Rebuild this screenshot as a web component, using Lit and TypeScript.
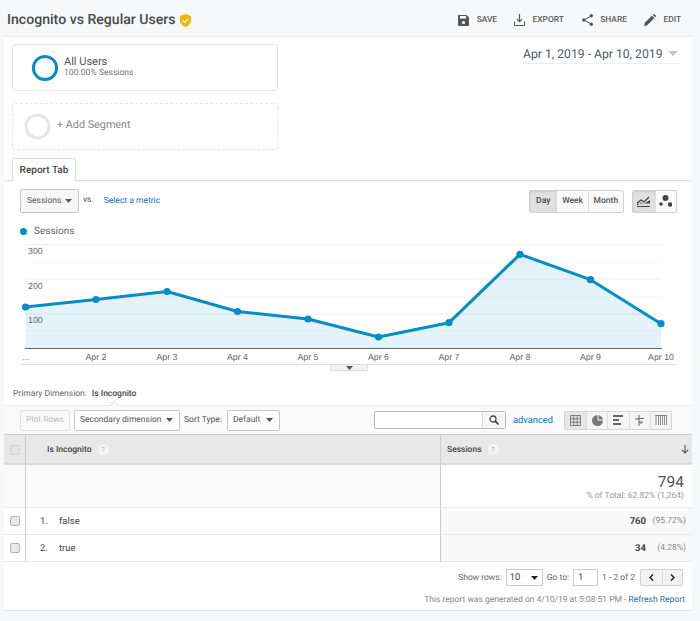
import { LitElement, html, css, svg } from "lit";
import { customElement } from "lit/decorators.js";

const xs = [25.5, 96, 167, 237.5, 308, 378.5, 449, 520, 590.5, 661];
const ys = [307, 299.5, 291.5, 311.5, 319, 337, 322.7, 254.3, 279.7, 323.7];
const labels = ["…", "Apr 2", "Apr 3", "Apr 4", "Apr 5", "Apr 6", "Apr 7", "Apr 8", "Apr 9", "Apr 10"];
const Y0 = 240;

const caret = html`<svg class="caret" width="7" height="4" viewBox="0 0 7 4"><path d="M0 0h7L3.5 4z" fill="#555"/></svg>`;

@customElement("app-root")
export class AppRoot extends LitElement {
  static styles = css`
    :host { display: block; width: 700px; height: 621px; overflow: hidden; background: #f6f8fa; font-family: Roboto, "Liberation Sans", sans-serif; color: #444; text-rendering: geometricPrecision; }
    svg { display: block; flex: none; }
    .head { height: 36px; display: flex; align-items: center; padding: 4px 19px 0 7px; box-sizing: border-box; }
    .title { font-size: 14.1px; font-weight: 500; color: #4a4a4a; }
    .shield { margin-left: 4px; }
    .actions { margin-left: auto; display: flex; align-items: center; }
    .act { display: flex; align-items: center; font-size: 8.4px; font-weight: 500; color: #5a5a5a; }
    .act span { margin-left: 7.5px; }
    .a1 { margin-right: 17px; } .a2 { margin-right: 18px; } .a3 { margin-right: 17px; }
    .panel { margin-left: 4px; width: 688px; height: 575px; background: #fff; border-top: 1px solid #e8eaec; border-bottom: 1px solid #e4e4e4; box-sizing: border-box; display: flex; flex-direction: column; }
    .top { display: flex; justify-content: space-between; padding: 7px 12px 0 8px; }
    .segs { display: flex; flex-direction: column; gap: 12px; }
    .seg { width: 266px; height: 47px; box-sizing: border-box; border: 1px solid #e6e6e6; border-radius: 3px; display: flex; align-items: center; }
    .seg.all { padding-left: 18px; }
    .seg.add { border-style: dashed; padding-left: 11px; color: #888; font-size: 10.8px; }
    .seg .txt { margin-left: 6px; }
    .seg .add-t { margin-left: 6px; margin-top: -4px; }
    .name { font-size: 11px; color: #555; line-height: 13px; }
    .sub { font-size: 8.6px; color: #777; line-height: 11px; }
    .all .txt { margin-left: 5px; margin-top: -1px; }
    .date { width: 158px; height: 20px; border-bottom: 1px solid #eee; display: flex; align-items: center; justify-content: space-between; font-size: 12.2px; color: #4f5b66; padding: 0 1px; box-sizing: border-box; white-space: nowrap; }
    .date svg { margin-right: 1px; }
    .tabrow { margin-top: 8px; padding-left: 8px; border-bottom: 1px solid #d9d9d9; height: 22px; display: flex; }
    .tab { width: 64px; height: 23px; box-sizing: border-box; border: 1px solid #d9d9d9; border-bottom: none; border-radius: 3px 3px 0 0; background: #fff; font-size: 10px; font-weight: 500; color: #444; display: flex; align-items: center; justify-content: center; }
    .ctl { display: flex; align-items: center; padding: 8px 15px 0 16px; height: 24px; box-sizing: content-box; }
    .dd { height: 24px; box-sizing: border-box; border: 1px solid #c8c8c8; border-radius: 2px; background: #f7f7f7; font-size: 8.5px; color: #555; display: flex; align-items: center; justify-content: space-between; padding: 0 6px; white-space: nowrap; }
    .dd.s { width: 59px; }
    .vs { font-size: 8.5px; color: #555; margin-left: 4px; margin-top: -3px; }
    a { color: #1f6fa8; text-decoration: none; }
    .metric { font-size: 8.5px; margin-left: 10px; white-space: nowrap; }
    .btns { display: flex; border: 1px solid #d0d0d0; border-radius: 2px; height: 23px; box-sizing: border-box; background: #fafafa; font-size: 8.5px; font-weight: 500; color: #555; }
    .btns div { display: flex; align-items: center; justify-content: center; border-left: 1px solid #ddd; box-sizing: border-box; }
    .btns div:first-child { border-left: none; }
    .btns .on { background: #e0e0e0; color: #444; box-shadow: inset 0 1px 2px rgba(0,0,0,.1); }
    .b1 { margin-left: auto; }
    .b2 { margin-left: 8px; }
    .legend { display: flex; align-items: center; margin-left: 16px; margin-top: 12px; height: 12px; font-size: 10px; color: #666; }
    .dot { width: 7px; height: 7px; border-radius: 50%; background: #058dc7; margin-right: 7px; }
    .chart { margin-top: 3px; position: relative; height: 130px; }
    .grip { position: absolute; left: 326px; top: 125px; width: 38px; height: 6px; box-sizing: border-box; background: #f2f2f2; border: 1px solid #ddd; border-top: none; border-radius: 0 0 2px 2px; display: flex; align-items: center; justify-content: center; }
    .prim { margin: 18px 0 0 9px; height: 12px; font-size: 8.5px; color: #666; display: flex; align-items: center; gap: 5px; white-space: nowrap; }
    .prim b { font-weight: 500; color: #444; }
    .wrap { position: relative; }
    .notch { position: absolute; left: 107px; top: 32px; width: 6px; height: 6px; background: #fafafa; border-left: 1px solid #e5e5e5; border-top: 1px solid #e5e5e5; transform: rotate(45deg); }
    .bar { margin-top: 5px; height: 29px; box-sizing: border-box; background: #fafafa; border-top: 1px solid #eee; display: flex; align-items: center; padding: 0 20px 0 16px; font-size: 8.5px; color: #555; white-space: nowrap; }
    .pb { height: 21px; box-sizing: border-box; border: 1px solid #e2e2e2; border-radius: 2px; display: flex; align-items: center; justify-content: center; flex: none; }
    .plot { width: 50px; color: #bbb; }
    .sec { width: 106px; margin-left: 4px; border-color: #c8c8c8; background: #fff; justify-content: space-between; padding: 0 6px 0 5px; }
    .sort { margin-left: 4px; width: 39px; }
    .def { width: 53px; margin-left: 4px; border-color: #c8c8c8; background: #fff; justify-content: space-between; padding: 0 6px 0 5px; }
    .search { margin-left: 94px; width: 132px; height: 18px; box-sizing: border-box; border: 1px solid #bbb; border-radius: 2px; display: flex; background: #fff; justify-content: flex-end; flex: none; }
    .search div { width: 22px; border-left: 1px solid #d6d6d6; background: #f6f6f6; display: flex; align-items: center; justify-content: center; }
    .adv { margin-left: 7px; font-size: 9.3px; width: 44px; flex: none; }
    .views { margin-left: 7px; display: grid; grid-template-columns: repeat(5, 1fr); width: 108px; height: 19px; border: 1px solid #d5d5d5; box-sizing: border-box; background: #f4f4f4; flex: none; }
    .views div { display: flex; align-items: center; justify-content: center; border-left: 1px solid #ddd; }
    .views div:first-child { border-left: none; background: #e6e6e6; }
    .tbl { display: grid; grid-template-columns: 22px 415px 251px; grid-template-rows: 31px 43px 27px 27px; }
    .tbl > div { box-sizing: border-box; display: flex; align-items: center; font-size: 9.5px; color: #444; }
    .tbl > .h { background: #e8e8e8; border-top: 1px solid #ccc; border-bottom: 2px solid #dadada; font-size: 8.5px; font-weight: 500; padding-top: 1px; }
    .c0 { border-right: 1px solid #ccc; justify-content: center; }
    .c1 { border-right: 1px solid #ccc; }
    .r { border-bottom: 1px solid #eaeaea; }
    .c2.r { background: #f9f9f9; justify-content: flex-end; padding-right: 6px; }
    .tot.c0 { background: #fafafa; }
    .tot.c1 { background: #fafafa; }
    .tbl > .tot.c2 { background: #fff; flex-direction: column; align-items: flex-end; justify-content: center; padding-right: 8px; padding-top: 4px; }
    .big { font-size: 15.5px; line-height: 17px; color: #555; }
    .pct { font-size: 8.5px; line-height: 11px; color: #999; }
    .chk { width: 10px; height: 10px; border: 1px solid #b5b5b5; border-radius: 2px; background: #e8e8e8; box-sizing: border-box; }
    .h .chk { border-color: #d0d0d0; background: #e4e4e4; }
    .q { width: 11px; height: 11px; border-radius: 50%; background: #f4f4f4; color: #aaa; font-size: 7px; font-weight: 400; display: flex; align-items: center; justify-content: center; margin-left: 6px; }
    .tbl > .hname { padding-left: 21px; }
    .tbl > .hs { padding-left: 6px; padding-right: 3px; }
    .arrow { margin-left: auto; }
    .num { width: 19px; margin-left: 14px; }
    .val { font-weight: 700; font-size: 9.5px; color: #444; }
    .share { width: 40px; text-align: right; font-size: 8.5px; color: #888; }
    .foot { display: flex; align-items: center; justify-content: flex-end; margin-top: 7px; height: 17px; padding-right: 9px; font-size: 8.5px; color: #666; white-space: nowrap; }
    .sel { width: 37px; height: 17px; box-sizing: border-box; border: 1px solid #ccc; margin-left: 4px; display: flex; align-items: center; justify-content: space-between; padding: 0 4px 0 3px; font-size: 9.5px; color: #444; }
    .sel svg path { fill: #222; }
    .goto { margin-left: 4px; }
    .inp { width: 25px; height: 17px; box-sizing: border-box; border: 1px solid #ccc; margin-left: 4px; display: flex; align-items: center; padding-left: 4px; font-size: 9.5px; color: #444; }
    .rng { margin-left: 4px; }
    .pg { margin-left: 5px; width: 43px; height: 17px; box-sizing: border-box; border: 1px solid #d0d0d0; border-radius: 2px; background: #f2f2f2; display: grid; grid-template-columns: 1fr 1fr; }
    .pg div { display: flex; align-items: center; justify-content: center; }
    .pg div + div { border-left: 1px solid #ddd; }
    .gen { margin-top: 8px; padding-right: 7px; text-align: right; font-size: 8.5px; line-height: 12px; color: #888; }
  `;

  chart() {
    const pts = xs.map((x, i) => `${x},${ys[i] - Y0}`).join(" ");
    const area = `25.5,${348.5 - Y0} ${pts} 661,${348.5 - Y0}`;
    const grid = [244.5, 262, 279, 297, 314, 331];
    return html`<svg width="688" height="130" viewBox="0 0 688 130" style="margin-left:-4px">
      ${grid.map((g, i) => svg`<line x1="25" x2="662" y1=${g - Y0} y2=${g - Y0} stroke=${i % 2 ? "#f7f7f7" : "#f0f0f0"}/>`)}
      <polygon points=${area} fill="#058dc7" fill-opacity=".11"/>
      <polyline points=${pts} fill="none" stroke="#058dc7" stroke-width="3" stroke-linejoin="round"/>
      ${xs.map((x, i) => svg`<circle cx=${x} cy=${ys[i] - Y0} r="3.6" fill="#058dc7"/>`)}
      <line x1="25" x2="662" y1=${108.5} y2=${108.5} stroke="#666"/>
      <line x1="21" x2="676" y1=${124.5} y2=${124.5} stroke="#ddd"/>
      ${[["300", 251], ["200", 286], ["100", 320]].map(([t, y]) => svg`<text x="28" y=${(y as number) - Y0 + 3} font-size="8.8" fill="#666" font-family="Liberation Sans">${t}</text>`)}
      ${labels.map((l, i) => i === 0
        ? svg`<text x="22" y="120" font-size="8.8" fill="#888" font-family="Liberation Sans">...</text>`
        : svg`<text x=${xs[i]} y="120" text-anchor="middle" font-size="8.8" fill="#666" font-family="Liberation Sans">${l}</text>`)}
    </svg>`;
  }

  render() {
    return html`
      <div class="head">
        <div class="title">Incognito vs Regular Users</div>
        <svg class="shield" width="11" height="13" viewBox="0 0 11 13"><path d="M5.5 0L11 2v4.2c0 3-2.3 5.6-5.5 6.8C2.300 11.800 0 9.200 0 6.200V2z" fill="#f4b400"/><path d="M3 6.500l1.800 1.800L8.200 4.800" fill="none" stroke="#fff" stroke-width="1.300"/></svg>
        <div class="actions">
          <div class="act a1"><svg width="11" height="11" viewBox="0 0 11 11"><path d="M0 1a1 1 0 011-1h7.500L11 2.500V10a1 1 0 01-1 1H1a1 1 0 01-1-1z" fill="#555"/><rect x="2" y="1" width="6" height="2.600" fill="#f6f8fa"/><circle cx="5.500" cy="7.500" r="1.600" fill="#f6f8fa"/></svg><span>SAVE</span></div>
          <div class="act a2"><svg width="11" height="12" viewBox="0 0 11 12"><path d="M5.500 0v7.500M3 5.200l2.500 2.500L8 5.200" fill="none" stroke="#555" stroke-width="1.200"/><path d="M.5 7.500v4h10v-4" fill="none" stroke="#555"/></svg><span>EXPORT</span></div>
          <div class="act a3"><svg width="11" height="12" viewBox="0 0 11 12"><path d="M9.500 1.800L1.800 6l7.700 4.200" fill="none" stroke="#555"/><circle cx="9.300" cy="1.800" r="1.700" fill="#555"/><circle cx="9.300" cy="10.200" r="1.700" fill="#555"/><circle cx="1.800" cy="6" r="1.700" fill="#555"/></svg><span>SHARE</span></div>
          <div class="act"><svg width="12" height="12" viewBox="0 0 12 12"><path d="M0 12l.8-3.200L8 1.600 10.400 4 3.200 11.200zM8.800.8l.6-.6a.8.8 0 011.100 0l1.300 1.300a.8.8 0 010 1.100l-.6.6z" fill="#555"/></svg><span>EDIT</span></div>
        </div>
      </div>
      <div class="panel">
        <div class="top">
          <div class="segs">
            <div class="seg all">
              <svg width="28" height="28" viewBox="0 0 28 28"><circle cx="14" cy="14" r="11.600" fill="none" stroke="#058dc7" stroke-width="3"/></svg>
              <div class="txt"><div class="name">All Users</div><div class="sub">100.00% Sessions</div></div>
            </div>
            <div class="seg add">
              <svg width="27" height="27" viewBox="0 0 27 27"><circle cx="13.500" cy="13.500" r="11.500" fill="none" stroke="#e6e6e6" stroke-width="3"/></svg>
              <div class="add-t">+ Add Segment</div>
            </div>
          </div>
          <div class="date">Apr 1, 2019 - Apr 10, 2019 <svg width="10" height="5" viewBox="0 0 10 5"><path d="M0 0h10L5 5z" fill="#c4c4c4"/></svg></div>
        </div>
        <div class="tabrow"><div class="tab">Report Tab</div></div>
        <div class="ctl">
          <div class="dd s">Sessions ${caret}</div>
          <div class="vs">vs.</div>
          <a class="metric">Select a metric</a>
          <div class="btns b1" style="width:95px">
            <div class="on" style="width:27px">Day</div><div style="width:32px">Week</div><div style="width:36px">Month</div>
          </div>
          <div class="btns b2" style="width:45px">
            <div class="on" style="width:23px"><svg width="13" height="11" viewBox="0 0 13 11"><path d="M0 7l4-3 3 2 5-5" fill="none" stroke="#444" stroke-width="1.300"/><path d="M0 9.500l4-3 3 1.500 6-4v3.500H0z" fill="#444"/><path d="M0 10.500h13" stroke="#444"/></svg></div>
            <div style="width:22px"><svg width="13" height="12" viewBox="0 0 13 12"><circle cx="6.500" cy="3" r="3" fill="#444"/><circle cx="2" cy="9" r="1.800" fill="#444"/><circle cx="11" cy="9.500" r="2.200" fill="#444"/></svg></div>
          </div>
        </div>
        <div class="legend"><span class="dot"></span>Sessions</div>
        <div class="chart">
          ${this.chart()}
          <div class="grip">${caret}</div>
        </div>
        <div class="wrap">
          <div class="prim">Primary Dimension: <b>Is Incognito</b></div>
          <div class="bar">
            <div class="pb plot">Plot Rows</div>
            <div class="pb sec">Secondary dimension ${caret}</div>
            <div class="sort">Sort Type:</div>
            <div class="pb def">Default ${caret}</div>
            <div class="search"><div><svg width="10" height="10" viewBox="0 0 10 10"><circle cx="4" cy="4" r="3" fill="none" stroke="#444" stroke-width="1.300"/><path d="M6.200 6.200L9.500 9.500" stroke="#444" stroke-width="1.700"/></svg></div></div>
            <a class="adv">advanced</a>
            <div class="views">
              <div><svg width="11" height="11" viewBox="0 0 11 11"><path d="M.5.500h10v10H.5zM.5 3.800h10M.5 7.200h10M3.800.500v10M7.200.500v10" fill="none" stroke="#666" stroke-width=".8"/></svg></div>
              <div><svg width="11" height="11" viewBox="0 0 11 11"><circle cx="5.500" cy="5.500" r="5.500" fill="#777"/><path d="M5.500 5.500V0h1v4.500H11v1z" fill="#f4f4f4"/></svg></div>
              <div><svg width="11" height="10" viewBox="0 0 11 10"><path d="M0 0h10v2H0zM0 4h6v2H0zM0 8h8v2H0z" fill="#666"/></svg></div>
              <div><svg width="11" height="11" viewBox="0 0 11 11"><path d="M5 0v11M1 4h4M5 3.500h5M5 7h4M7 7v2" fill="none" stroke="#666"/></svg></div>
              <div><svg width="12" height="10" viewBox="0 0 12 10"><path d="M1 0v10M3.500 0v10M5.500 0v10M7.500 0v10M9.500 0v10M11.500 0v10M0 .5h12" fill="none" stroke="#777" stroke-width=".8"/></svg></div>
            </div>
          </div>
          <div class="notch"></div>
        </div>
        <div class="tbl">
          <div class="h c0"><span class="chk"></span></div>
          <div class="h c1 hname">Is Incognito <span class="q">?</span></div>
          <div class="h hs">Sessions <span class="q">?</span><svg class="arrow" width="8" height="9" viewBox="0 0 8 9"><path d="M4 0v8M.8 4.800L4 8l3.200-3.200" fill="none" stroke="#555" stroke-width="1.100"/></svg></div>
          <div class="tot c0 r"></div>
          <div class="tot c1 r"></div>
          <div class="tot c2 r"><div class="big">794</div><div class="pct">% of Total: 62.82% (1,264)</div></div>
          <div class="c0 r"><span class="chk"></span></div>
          <div class="c1 r"><span class="num">1.</span><span>false</span></div>
          <div class="c2 r"><span class="val">760</span><span class="share">(95.72%)</span></div>
          <div class="c0 r"><span class="chk"></span></div>
          <div class="c1 r"><span class="num">2.</span><span>true</span></div>
          <div class="c2 r"><span class="val">34</span><span class="share">(4.28%)</span></div>
        </div>
        <div class="foot">
          <span>Show rows:</span>
          <div class="sel">10 ${caret}</div>
          <span class="goto">Go to:</span>
          <div class="inp">1</div>
          <span class="rng">1 - 2 of 2</span>
          <div class="pg">
            <div><svg width="5" height="7" viewBox="0 0 5 7"><path d="M4 .5L1 3.500 4 6.500" fill="none" stroke="#222" stroke-width="1.500"/></svg></div>
            <div><svg width="5" height="7" viewBox="0 0 5 7"><path d="M1 .5L4 3.500 1 6.500" fill="none" stroke="#222" stroke-width="1.500"/></svg></div>
          </div>
        </div>
        <div class="gen">This report was generated on 4/10/19 at 5:08:51 PM - <a>Refresh Report</a></div>
      </div>
    `;
  }
}
